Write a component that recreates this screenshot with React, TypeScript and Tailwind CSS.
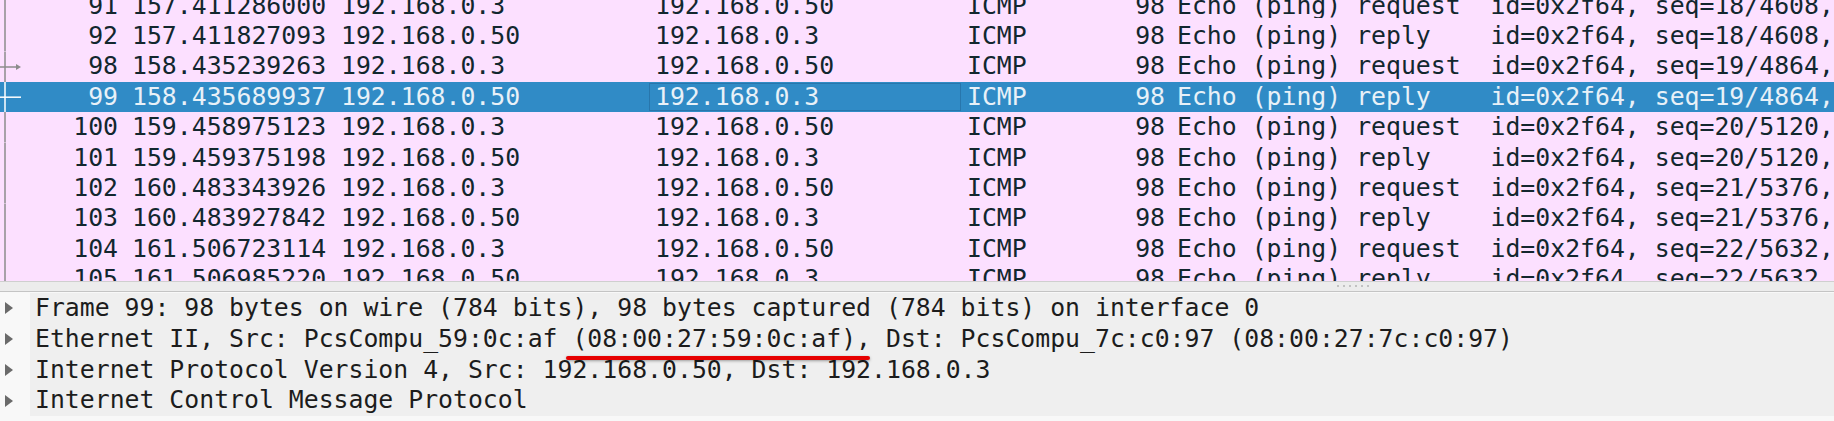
import React from "react";

type Pkt = {
  no: string;
  time: string;
  src: string;
  dst: string;
  info: string;
  mark?: "arrow" | "sel";
};

const REQ = (seq: string, reply: string) =>
  `Echo (ping) request  id=0x2f64, seq=${seq}, ttl=64 (reply in ${reply})`;
const REP = (seq: string, req: string) =>
  `Echo (ping) reply    id=0x2f64, seq=${seq}, ttl=64 (request in ${req})`;

const A = "192.168.0.3";
const B = "192.168.0.50";

const rows: Pkt[] = [
  { no: "91", time: "157.411286000", src: A, dst: B, info: REQ("18/4608", "92") },
  { no: "92", time: "157.411827093", src: B, dst: A, info: REP("18/4608", "91") },
  { no: "98", time: "158.435239263", src: A, dst: B, info: REQ("19/4864", "99"), mark: "arrow" },
  { no: "99", time: "158.435689937", src: B, dst: A, info: REP("19/4864", "98"), mark: "sel" },
  { no: "100", time: "159.458975123", src: A, dst: B, info: REQ("20/5120", "101") },
  { no: "101", time: "159.459375198", src: B, dst: A, info: REP("20/5120", "100") },
  { no: "102", time: "160.483343926", src: A, dst: B, info: REQ("21/5376", "103") },
  { no: "103", time: "160.483927842", src: B, dst: A, info: REP("21/5376", "102") },
  { no: "104", time: "161.506723114", src: A, dst: B, info: REQ("22/5632", "105") },
  { no: "105", time: "161.506985220", src: B, dst: A, info: REP("22/5632", "104") },
];

function Indicator({ mark }: { mark?: "arrow" | "sel" }) {
  const sel = mark === "sel";
  const c = sel ? "#ffffff" : "#8c8c8c";
  return (
    <svg
      className="absolute left-0 top-0 h-full w-[26px]"
      viewBox="0 0 26 30.4"
      preserveAspectRatio="none"
    >
      <line x1="5" y1="0" x2="5" y2="30.4" stroke={c} strokeWidth="1.5" />
      {sel && <line x1="0" y1="15.2" x2="21" y2="15.2" stroke={c} strokeWidth="1.5" />}
      {mark === "arrow" && (
        <>
          <line x1="0" y1="15" x2="19" y2="15" stroke="#8c8c8c" strokeWidth="1.5" />
          <path d="M16 12 L21 15 L16 18 Z" fill="#8c8c8c" />
        </>
      )}
    </svg>
  );
}

function Row({ r }: { r: Pkt }) {
  const sel = r.mark === "sel";
  return (
    <div
      className={
        sel
          ? "relative flex h-[30.4px] items-center whitespace-pre bg-[#308bc6] text-[#e8f1f8]"
          : "relative flex h-[30.4px] items-center whitespace-pre text-[#12272e]"
      }
    >
      <Indicator mark={r.mark} />
      <div className="w-[126px] shrink-0 pr-[8px] text-right">{r.no}</div>
      <div className="w-[209px] shrink-0 pl-[6px]">{r.time}</div>
      <div className="w-[314px] shrink-0 pl-[6px]">{r.src}</div>
      <div
        className={
          sel
            ? "flex h-[28.4px] w-[312px] shrink-0 items-center border border-[#2876ac] pl-[5px]"
            : "flex h-[28.4px] w-[312px] shrink-0 items-center border border-transparent pl-[5px]"
        }
      >
        {r.dst}
      </div>
      <div className="w-[139px] shrink-0 pl-[6px]">ICMP</div>
      <div className="w-[67px] shrink-0 pr-[2px] text-right">98</div>
      <div className="min-w-0 flex-1 overflow-hidden pl-[10px]">{r.info}</div>
    </div>
  );
}

const details = [
  "Frame 99: 98 bytes on wire (784 bits), 98 bytes captured (784 bits) on interface 0",
  "Ethernet II, Src: PcsCompu_59:0c:af (08:00:27:59:0c:af), Dst: PcsCompu_7c:c0:97 (08:00:27:7c:c0:97)",
  "Internet Protocol Version 4, Src: 192.168.0.50, Dst: 192.168.0.3",
  "Internet Control Message Protocol",
];

export default function App() {
  return (
    <div className="flex h-[421px] w-full flex-col overflow-hidden bg-[#f8f8f8] font-['DejaVu_Sans_Mono',monospace] text-[24.8px] leading-none">
      {/* packet list */}
      <div className="h-[281px] shrink-0 overflow-hidden bg-[#fce0ff]">
        <div className="mt-[-9.2px]">
          {rows.map((r) => (
            <Row key={r.no} r={r} />
          ))}
        </div>
      </div>
      {/* splitter */}
      <div className="relative h-[11px] shrink-0 border-t border-[#cfcfcf] border-b border-b-[#c4c4c4] bg-[#ececec]">
        <div className="absolute left-[1337px] top-[3px] flex gap-[4px]">
          {[0, 1, 2, 3, 4, 5].map((i) => (
            <div key={i} className="h-[2px] w-[2px] bg-[#c2c2c2]" />
          ))}
        </div>
      </div>
      {/* details */}
      <div className="flex flex-1 flex-col pt-[1px] text-[#1c1c1c]">
        {details.map((d, i) => (
          <div key={i} className="relative flex h-[30.8px] shrink-0 items-center whitespace-pre">
            <div className="flex h-full w-[30px] shrink-0 items-center pl-[5px]">
              <svg width="8" height="12" viewBox="0 0 8 12">
                <path d="M0 0 L8 6 L0 12 Z" fill="#6a6a6a" />
              </svg>
            </div>
            <div className="flex h-full flex-1 items-center overflow-hidden bg-[#efefef] pl-[5px]">
              {d}
            </div>
            {i === 1 && (
              <div className="absolute left-[566px] top-[32px] z-10 h-[4px] w-[304px] rounded-full bg-[#e60000] shadow-[0_1px_3px_rgba(0,0,0,0.35)]" />
            )}
          </div>
        ))}
      </div>
    </div>
  );
}
